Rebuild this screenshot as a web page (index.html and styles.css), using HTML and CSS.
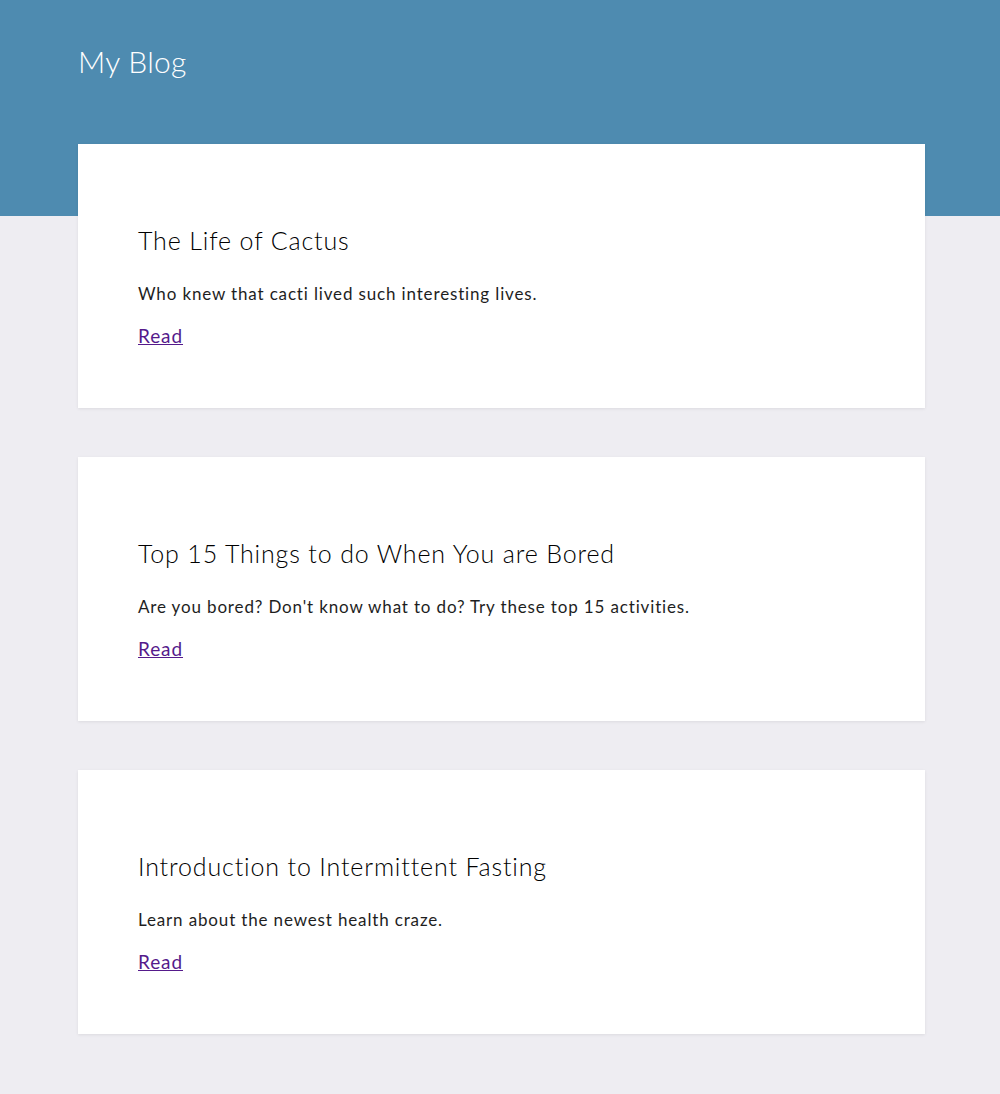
FILE: index.html
```html
<!DOCTYPE html>
<html>
<head>
<meta charset="utf-8">
<title>My Blog</title>
<link rel="stylesheet" href="styles.css">
</head>
<body>
<header class="site-header">
  <h1 class="site-title">My Blog</h1>
</header>
<main class="posts">
  <article class="card">
    <h2 class="card-title">The Life of Cactus</h2>
    <p class="card-text">Who knew that cacti lived such interesting lives.</p>
    <a class="card-link" href="#">Read</a>
  </article>
  <article class="card">
    <h2 class="card-title">Top 15 Things to do When You are Bored</h2>
    <p class="card-text">Are you bored? Don't know what to do? Try these top 15 activities.</p>
    <a class="card-link" href="#">Read</a>
  </article>
  <article class="card">
    <h2 class="card-title">Introduction to Intermittent Fasting</h2>
    <p class="card-text">Learn about the newest health craze.</p>
    <a class="card-link" href="#">Read</a>
  </article>
</main>
</body>
</html>
```
FILE: styles.css
```css
html, body {
  margin: 0;
  padding: 0;
}
body {
  background: #eeedf2;
  font-family: Lato, "Noto Sans", sans-serif;
  font-weight: 300;
  color: #1a1a1a;
}
.site-header {
  background: #4e8bb0;
  height: 216px;
  box-sizing: border-box;
  padding: 43px 78px 0;
}
.site-title {
  margin: 0;
  font-size: 30px;
  font-weight: 300;
  color: #ffffff;
  line-height: 36px;
  letter-spacing: 0.3px;
}
.posts {
  margin: -72px 75px 0 78px;
  padding-bottom: 61px;
  display: flex;
  flex-direction: column;
  gap: 49px;
}
.card {
  background: #ffffff;
  height: 264px;
  box-sizing: border-box;
  padding: 81px 60px 0;
  box-shadow: 0 1px 3px rgba(0, 0, 0, 0.08);
}
.card-title {
  margin: 0;
  font-size: 25px;
  font-weight: 300;
  line-height: 30px;
  color: #000;
  letter-spacing: 0.85px;
}
.card-text {
  margin: 28px 0 0;
  font-size: 17px;
  font-weight: 400;
  line-height: 22px;
  color: #1e1e1e;
  letter-spacing: 0.85px;
}
.card-link {
  display: inline-block;
  margin-top: 20px;
  font-size: 19px;
  font-weight: 400;
  line-height: 22px;
  color: #551a8b;
  letter-spacing: 0.9px;
}
```
